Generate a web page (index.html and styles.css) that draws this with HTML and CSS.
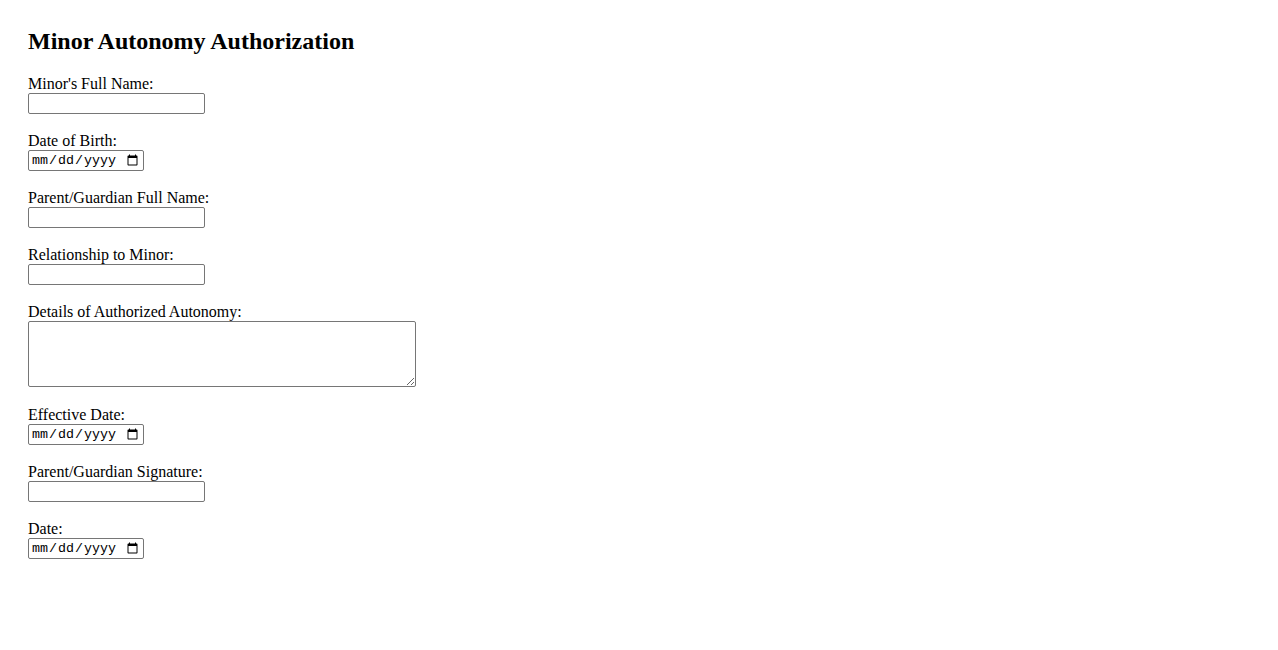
FILE: index.html
```html
<!DOCTYPE html>
<html lang="en">
<head>
<meta charset="utf-8">
<title>Minor Autonomy Authorization</title>
<link rel="stylesheet" href="styles.css">
</head>
<body>
<h2 class="title">Minor Autonomy Authorization</h2>
<form class="form">
  <div class="group">
    <label class="label" for="minorName">Minor's Full Name:</label>
    <input class="text" type="text" id="minorName">
  </div>
  <div class="group">
    <label class="label" for="dob">Date of Birth:</label>
    <input class="date" type="date" id="dob">
  </div>
  <div class="group">
    <label class="label" for="parentName">Parent/Guardian Full Name:</label>
    <input class="text" type="text" id="parentName">
  </div>
  <div class="group">
    <label class="label" for="relationship">Relationship to Minor:</label>
    <input class="text" type="text" id="relationship">
  </div>
  <div class="group">
    <label class="label" for="details">Details of Authorized Autonomy:</label>
    <textarea class="area" id="details" rows="4"></textarea>
  </div>
  <div class="group">
    <label class="label" for="effective">Effective Date:</label>
    <input class="date" type="date" id="effective">
  </div>
  <div class="group">
    <label class="label" for="signature">Parent/Guardian Signature:</label>
    <input class="text" type="text" id="signature">
  </div>
  <div class="group">
    <label class="label" for="date">Date:</label>
    <input class="date" type="date" id="date">
  </div>
</form>
</body>
</html>
```

FILE: styles.css
```css
html, body {
  background: #ffffff;
}
body {
  margin: 8px;
  padding: 20px;
  font-family: "Liberation Serif", "Times New Roman", serif;
  font-size: 16px;
  color: #000;
}
.title {
  margin: 0 0 20px 0;
  font-size: 24px;
  font-weight: bold;
}
.form {
  margin: 0;
}
.group {
  margin-bottom: 15px;
}
.label {
  display: block;
}
.text, .date {
  box-sizing: border-box;
  height: 21px;
  margin: 0 0 3px 0;
  border: 1px solid #767676;
  border-radius: 2px;
  padding: 1px 2px;
  font-family: "Liberation Mono", monospace;
  font-size: 13.33px;
  background: #fff;
  vertical-align: baseline;
}
.text {
  width: 177px;
  font-family: "Liberation Sans", Arial, sans-serif;
}
.date {
  width: 116px;
}
.area {
  box-sizing: border-box;
  width: 388px;
  height: 66px;
  margin: 0;
  border: 1px solid #767676;
  border-radius: 2px;
  padding: 2px;
  font-family: "Liberation Mono", monospace;
  font-size: 13.33px;
  vertical-align: baseline;
}
```
